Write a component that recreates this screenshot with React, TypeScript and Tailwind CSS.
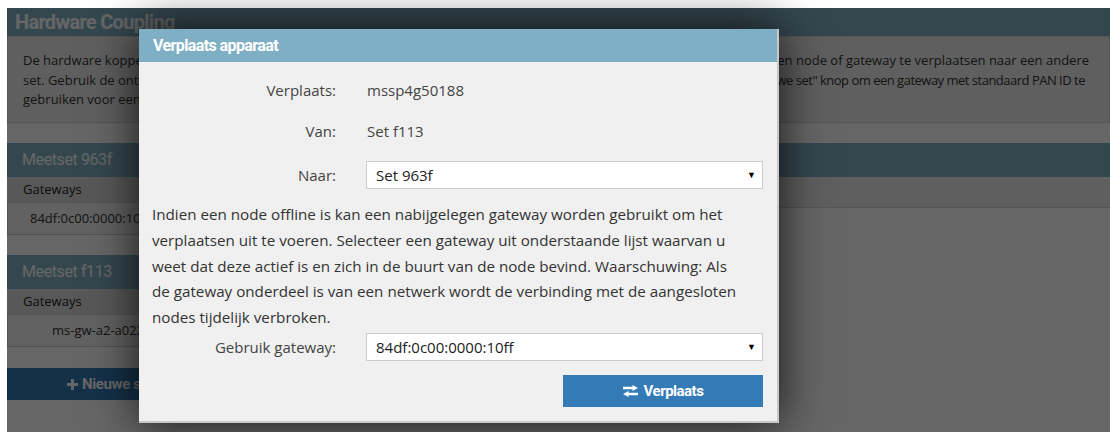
import React from "react";

const body = "font-['Open_Sans',sans-serif]";
const narrow = "font-['Liberation_Sans_Narrow','Roboto',sans-serif]";

const ExchangeIcon = () => (
  <svg width="15" height="12" viewBox="0 0 15 12" fill="currentColor" aria-hidden>
    <path d="M0 1.8h9.5V0L15 3 9.5 6V4.2H0z" />
    <path d="M15 7.8H5.5V6L0 9l5.5 3v-1.8H15z" />
  </svg>
);

const PlusIcon = () => (
  <svg width="11" height="11" viewBox="0 0 11 11" fill="currentColor" aria-hidden>
    <rect x="4" y="0" width="3" height="11" />
    <rect x="0" y="4" width="11" height="3" />
  </svg>
);

const Arrow = () => (
  <span className="pointer-events-none absolute right-[7px] top-1/2 -translate-y-1/2 text-[9px] text-black">▼</span>
);

function SetSection({ name, gateway, pad, full }: { name: string; gateway: string; pad: string; full?: boolean }) {
  return (
    <div className={full ? "mt-[20px]" : "mt-[20px] w-[640px]"}>
      <div className={`${narrow} h-[34px] bg-[#82b2c5] px-[15px] text-[16px] tracking-[-0.4px] leading-[34px] text-white`}>{name}</div>
      <div className="flex items-start">
        <div className="w-[206px]">
          <div className="h-[25px] bg-[#ddd] px-[16px] text-[13px] leading-[25px] text-[#222]">Gateways</div>
          <div className={`h-[33px] border border-[#cfcfcf] bg-[#f4f4f4] ${pad} text-[13px] leading-[31px] text-[#333]`}>
            {gateway}
          </div>
        </div>
        {full && <div className="h-[31px] flex-1 border-b border-[#d4d4d4] bg-[#eee]" />}
      </div>
    </div>
  );
}

export default function App() {
  return (
    <div className={`${body} h-[432px] w-[1120px] bg-white`}>
      <div className="relative ml-[7px] pt-[8px] w-[1103px] h-[432px]">
        {/* page behind the dialog */}
        <div className={`${narrow} h-[28px] bg-[#82b2c5] px-[8px] text-[20px] tracking-[-0.7px] font-bold leading-[28px] text-white`}>
          Hardware Coupling
        </div>
        <div className="h-[87px] border border-[#d4d4d4] bg-[#eee] pl-[15px] pt-[14px] text-[13px] leading-[19.5px] text-[#333]">
          <div className="flex justify-between pr-[20px]">
            <span>De hardware koppeling pagina kan worden gebruikt om</span>
            <span>een node of gateway te verplaatsen naar een andere</span>
          </div>
          <div className="flex justify-between pr-[24px]">
            <span>set. Gebruik de ontkoppel knop om een gateway los te maken en gebruik de</span>
            <span className="tracking-[-0.5px]">"Nieuwe set" knop om een gateway met standaard PAN ID te</span>
          </div>
          <div>gebruiken voor een nieuwe set.</div>
        </div>

        <SetSection name="Meetset 963f" gateway="84df:0c00:0000:10ff" pad="pl-[22px]" full />
        <SetSection name="Meetset f113" gateway="ms-gw-a2-a022f" pad="pl-[44px]" />

        <button className={`${narrow} mt-[21px] flex h-[32px] w-[206px] items-center justify-center gap-[4px] bg-[#337ab7] text-[15px] tracking-[-0.4px] font-bold text-white`}>
          <PlusIcon />
          Nieuwe set
        </button>

        {/* backdrop */}
        <div className="absolute inset-0 top-[8px] bg-black/60" />

        {/* dialog */}
        <div className="absolute left-[132px] top-[29px] w-[640px] border-r-2 border-b-2 border-[#c8c8c8] bg-[#f0f0f0] shadow-[0_0_45px_rgba(0,0,0,0.8)]">
          <div className={`${narrow} h-[33px] bg-[#7fafc5] px-[14px] text-[16px] tracking-[-0.6px] font-bold leading-[33px] text-white`}>
            Verplaats apparaat
          </div>
          <div className="pl-[13px] pr-[14px] pt-[14px] pb-[14px] text-[15px] text-[#444]">
            <div className="flex h-[28px] items-center gap-[31px]">
              <div className="w-[184px] text-right">Verplaats:</div>
              <div>mssp4g50188</div>
            </div>
            <div className="mt-[13px] flex h-[28px] items-center gap-[31px]">
              <div className="w-[184px] text-right">Van:</div>
              <div>Set f113</div>
            </div>
            <div className="mt-[16px] flex h-[28px] items-center gap-[30px]">
              <div className="w-[184px] text-right">Naar:</div>
              <div className="relative flex-1">
                <select className="h-[28px] w-full appearance-none border border-[#ccc] bg-white px-[9px] text-[15px] text-[#222] outline-none">
                  <option>Set 963f</option>
                  <option>Set f113</option>
                </select>
                <Arrow />
              </div>
            </div>
            <p className="mt-[13px] whitespace-nowrap text-[15.2px] leading-[25.75px] text-[#333]">
              Indien een node offline is kan een nabijgelegen gateway worden gebruikt om het
              <br />
              verplaatsen uit te voeren. Selecteer een gateway uit onderstaande lijst waarvan u
              <br />
              weet dat deze actief is en zich in de buurt van de node bevind. Waarschuwing: Als
              <br />
              de gateway onderdeel is van een netwerk wordt de verbinding met de aangesloten
              <br />
              nodes tijdelijk verbroken.
            </p>
            <div className="mt-[2px] flex h-[28px] items-center gap-[30px]">
              <div className="w-[184px] text-right">Gebruik gateway:</div>
              <div className="relative flex-1">
                <select className="h-[28px] w-full appearance-none border border-[#ccc] bg-white px-[9px] text-[15px] text-[#222] outline-none">
                  <option>84df:0c00:0000:10ff</option>
                  <option>ms-gw-a2-a022f</option>
                </select>
                <Arrow />
              </div>
            </div>
            <div className="mt-[14px] flex justify-end">
              <button className={`${narrow} flex h-[32px] w-[200px] items-center justify-center gap-[6px] bg-[#337ab7] text-[15px] tracking-[-0.5px] font-bold text-white`}>
                <ExchangeIcon />
                Verplaats
              </button>
            </div>
          </div>
        </div>
      </div>
    </div>
  );
}
